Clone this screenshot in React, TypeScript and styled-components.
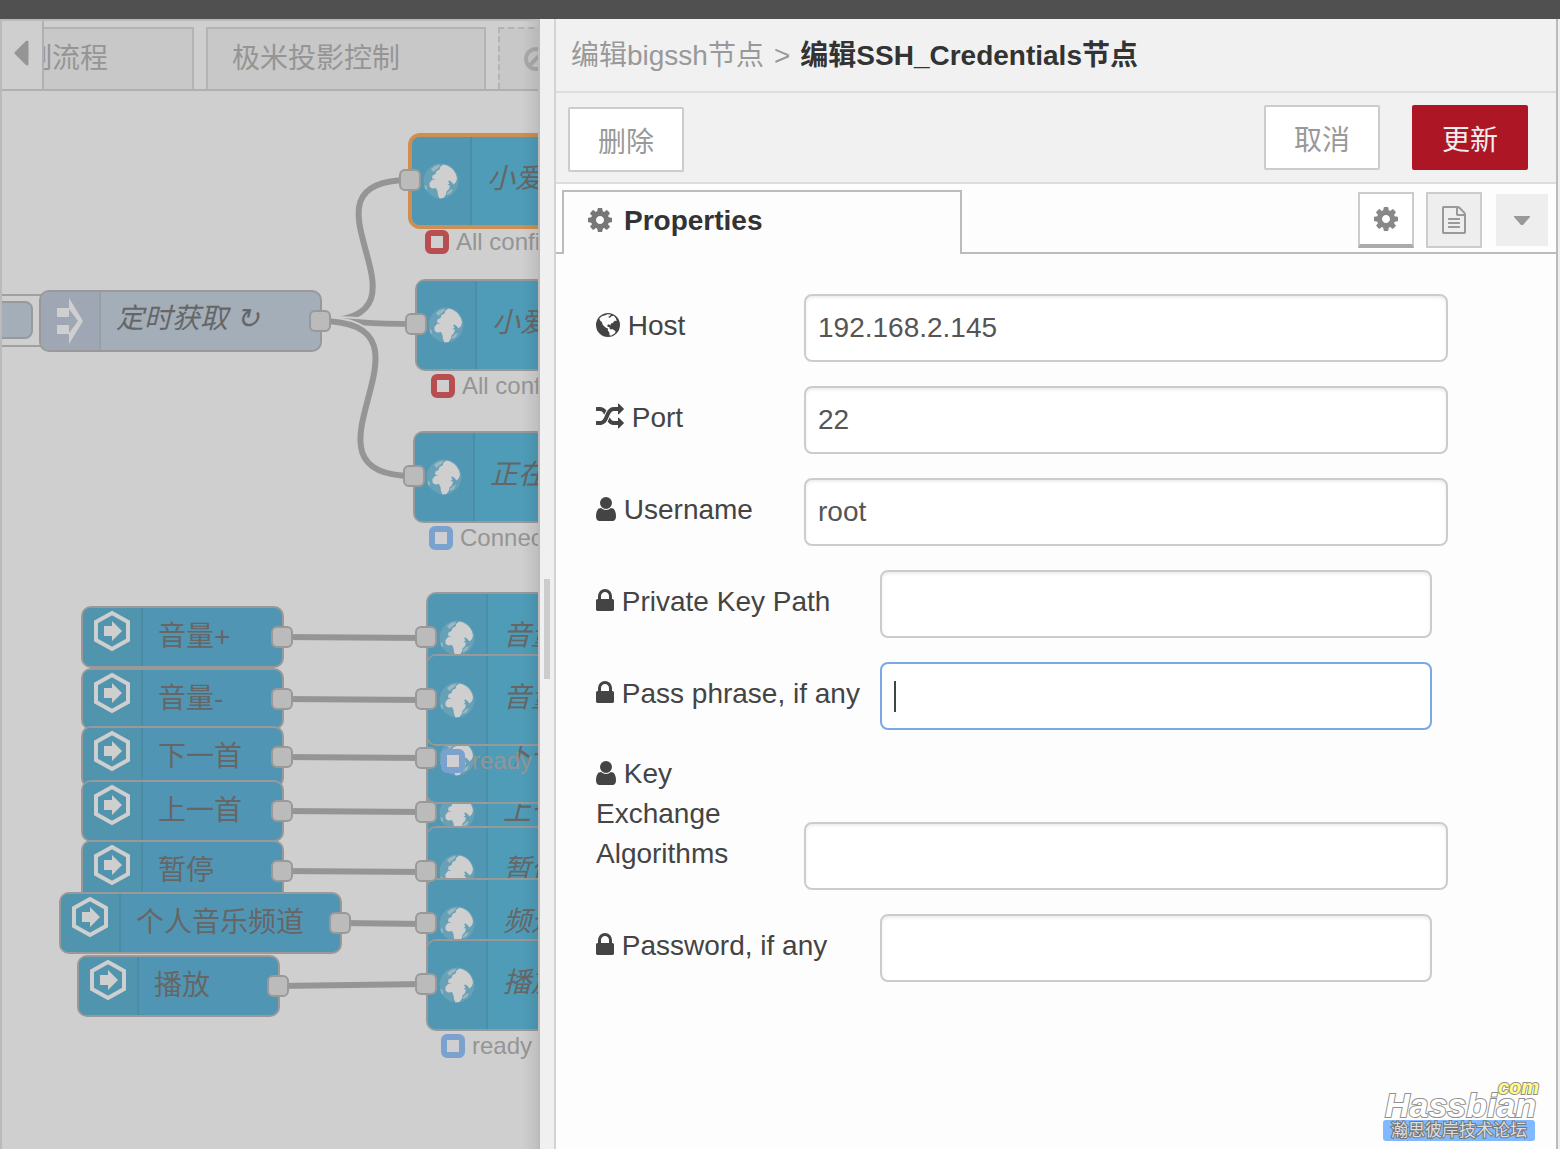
import React from "react";
import styled, { createGlobalStyle, css } from "styled-components";

const GlobalStyle = createGlobalStyle`
  *, *::before, *::after { box-sizing: border-box; }
  body {
    margin: 0;
    background: #cfcfcf;
    font-family: "Liberation Sans", "Noto Sans CJK SC", sans-serif;
    font-size: 28px;
    line-height: 40px;
    color: #444;
  }
  button, input { font: inherit; }
`;

/* ---------- shell ---------- */

const Page = styled.div`
  display: flex;
  flex-direction: column;
  min-height: 100vh;
`;

const TopBar = styled.header`
  flex: none;
  height: 19px;
  background: #505050;
`;

const Body = styled.main`
  flex: 1;
  display: grid;
  grid-template-columns: 540px minmax(0, 1fr);
`;

/* ---------- workspace ---------- */

const Workspace = styled.section`
  display: flex;
  flex-direction: column;
  position: relative;
  overflow: hidden;
  border: 2px solid #bababa;
  border-bottom: 0;
  background: #cfcfcf;

  &::after {
    content: "";
    position: absolute;
    inset: 0 0 0 auto;
    width: 16px;
    background: linear-gradient(to right, rgba(0, 0, 0, 0), rgba(0, 0, 0, 0.08));
  }
`;

const FlowTabs = styled.nav`
  flex: none;
  display: flex;
  align-items: flex-end;
  gap: 12px;
  height: 70px;
  border-bottom: 2px solid #b0b0b0;
`;

const FlowTab = styled.button<{ $first?: boolean; $disabled?: boolean }>`
  flex: none;
  width: ${(p) => (p.$first ? 192 : 280)}px;
  height: 62px;
  padding: 0 ${(p) => (p.$first ? 20 : 24)}px;
  border: 2px ${(p) => (p.$disabled ? "dashed" : "solid")} #b3b3b3;
  border-bottom: 0;
  background: #c8c8c8;
  color: ${(p) => (p.$disabled ? "#aaa" : "#959595")};
  text-align: left;
  white-space: nowrap;

  svg { display: block; width: 24px; height: 24px; }
`;

const ScrollTabs = styled.button`
  position: absolute;
  left: 0;
  top: 0;
  display: flex;
  align-items: center;
  justify-content: center;
  width: 42px;
  height: 70px;
  padding: 0 0 4px;
  border: solid #b0b0b0;
  border-width: 0 2px 2px 0;
  background: #cfcfcf;
`;

const Canvas = styled.div`
  flex: 1;
  position: relative;
  margin-top: 1px;
`;

const Wires = styled.svg`
  position: absolute;
  left: 0;
  top: 0;
  width: 100%;
  height: 100%;
  fill: none;
`;

type Look = "ssh" | "link" | "inject";

const looks: Record<Look, { bg: string; icon: string; h: number; line: string }> = {
  ssh: { bg: "#4f9cb8", icon: "#4f97b2", h: 92, line: "#4a8ea8" },
  link: { bg: "#5096b4", icon: "#5094ae", h: 62, line: "#4a8ba5" },
  inject: { bg: "#a3aeb9", icon: "#9fa7b4", h: 62, line: "#989eaa" },
};

const NodeBox = styled.div<{ $x: number; $y: number; $w: number; $look: Look; $selected?: boolean }>`
  position: absolute;
  left: ${(p) => p.$x}px;
  top: ${(p) => p.$y}px;
  display: flex;
  width: ${(p) => p.$w}px;
  height: ${(p) => looks[p.$look].h}px;
  border: 2px solid #999;
  border-radius: 10px;
  background: ${(p) => looks[p.$look].bg};
  color: #666;
  ${(p) => p.$selected && css`
    border-color: #cf8f50;
    box-shadow: 0 0 0 2px #cf8f50;
  `}
`;

const NodeIcon = styled.span<{ $look: Look }>`
  flex: none;
  display: flex;
  align-items: center;
  justify-content: center;
  width: 60px;
  padding-bottom: ${(p) => (p.$look === "link" ? 12 : 0)}px;
  border-right: 2px solid ${(p) => looks[p.$look].line};
  border-radius: 8px 0 0 8px;
  background: ${(p) => looks[p.$look].icon};
`;

const NodeLabel = styled.span<{ $italic?: boolean }>`
  align-self: center;
  padding: 0 0 ${(p) => (p.$italic ? 4 : 0)}px 15px;
  font-style: ${(p) => (p.$italic ? "italic" : "normal")};
  white-space: nowrap;
`;

const Port = styled.i<{ $x: number; $y: number }>`
  position: absolute;
  left: ${(p) => p.$x - 11}px;
  top: ${(p) => p.$y - 11}px;
  width: 22px;
  height: 22px;
  border: 2px solid #999;
  border-radius: 6px;
  background: #bbb;
`;

const Status = styled.div<{ $x: number; $y: number; $color: string }>`
  position: absolute;
  left: ${(p) => p.$x}px;
  top: ${(p) => p.$y}px;
  display: flex;
  align-items: center;
  gap: 7px;
  height: 24px;
  color: #959595;
  font-size: 24px;
  white-space: nowrap;

  &::before {
    content: "";
    width: 24px;
    height: 24px;
    border: 6px solid ${(p) => p.$color};
    border-radius: 6px;
    background: #cfcfcf;
  }
`;

const InjectFrame = styled.div`
  position: absolute;
  left: -20px;
  top: 202px;
  width: 80px;
  height: 53px;
  border: 2px solid #a0a0a0;
`;

const InjectButton = styled.button`
  position: absolute;
  left: -12px;
  top: 209px;
  width: 43px;
  height: 38px;
  border: 2px solid #999;
  border-radius: 8px;
  background: #a3aeb9;
`;

const EarthIcon = () => (
  <svg width="36" height="36" viewBox="0 0 36 36">
    <circle cx="18" cy="18" r="17.5" fill="#cfcfcf" fillOpacity=".2" />
    <path
      fill="#cfcfcf"
      d="M9 15.500l.5-3 3-1.500 1-3 3-1.500 1-3 3-2c4 .5 8 3 10.500 6.500l2 3.500 1 4-1 3.500-2.500 2.500-1.500-2-2.500-2-1.500.5 1.500 2.500-2.500 2-3-3.500-2.500-1.500-3 .5-2-1.500z"
    />
    <path fill="#cfcfcf" d="M6.500 20l2.500-3 4-1 5 1 3.500.500 2.500 4.500 3 .5-1 3.500-2.500 2.500-.5 3-2.500 3.500-4 .5-1.500-3.500-.5-4-1.500-3-4 .5-2.500-2z" />
    <path fill="#cfcfcf" fillOpacity=".5" d="M8 6l4-3 5-1.500-1 3-3.500 2.500-2 2zM1.500 22l2 1 .5 4-2-1zM24 30l3-3 3-1-2 4-4 2z" />
  </svg>
);

const LinkIcon = () => (
  <svg width="40" height="44" viewBox="0 0 40 44" fill="none">
    <path d="M20 4l16 9v18l-16 9-16-9V13z" stroke="#cfcfcf" strokeWidth="4" />
    <path d="M12 17h8v-5l10 10-10 10v-5h-8z" fill="#cfcfcf" />
  </svg>
);

const InjectIcon = () => (
  <svg width="26" height="48" viewBox="0 0 26 48">
    <path
      fill="#cfcfcf"
      fillRule="evenodd"
      d="M0 11h12V1l14 23-14 23V37H0zM0 20h12v-8l9 12-9 12v-8H0z"
    />
  </svg>
);

interface NodeSpec {
  x: number;
  y: number;
  w: number;
  look: Look;
  label: string;
  selected?: boolean;
}

const nodes: NodeSpec[] = [
  { x: 37, y: 198, w: 283, look: "inject", label: "定时获取 ↻" },
  { x: 408, y: 43, w: 260, look: "ssh", label: "小爱音箱", selected: true },
  { x: 413, y: 187, w: 260, look: "ssh", label: "小爱音箱" },
  { x: 411, y: 339, w: 260, look: "ssh", label: "正在播放" },
  { x: 424, y: 675, w: 260, look: "ssh", label: "上一首" },
  { x: 424, y: 620, w: 260, look: "ssh", label: "下一首" },
  { x: 424, y: 500, w: 260, look: "ssh", label: "音量+" },
  { x: 424, y: 562, w: 260, look: "ssh", label: "音量-" },
  { x: 424, y: 734, w: 260, look: "ssh", label: "暂停" },
  { x: 424, y: 786, w: 260, look: "ssh", label: "频道" },
  { x: 424, y: 847, w: 260, look: "ssh", label: "播放" },
  { x: 79, y: 514, w: 203, look: "link", label: "音量+" },
  { x: 79, y: 576, w: 203, look: "link", label: "音量-" },
  { x: 79, y: 634, w: 203, look: "link", label: "下一首" },
  { x: 79, y: 688, w: 203, look: "link", label: "上一首" },
  { x: 79, y: 748, w: 203, look: "link", label: "暂停" },
  { x: 57, y: 800, w: 283, look: "link", label: "个人音乐频道" },
  { x: 75, y: 863, w: 203, look: "link", label: "播放" },
];

const ports: [number, number][] = [
  [318, 229], [408, 88], [414, 232], [412, 384],
  [280, 545], [280, 607], [280, 665], [280, 719], [280, 779], [338, 831], [276, 894],
  [424, 545], [424, 607], [424, 666], [424, 720], [424, 779], [424, 831], [424, 892],
];

const wires = [
  "M318 229C448 229 280 88 408 88",
  "M318 229C370 229 350 232 414 232",
  "M318 229C455 229 278 384 412 384",
  "M280 545L424 546",
  "M280 607L424 608",
  "M280 665L424 666",
  "M280 719L424 720",
  "M280 779L424 780",
  "M338 831L424 832",
  "M276 894L424 892",
];

const nodeIcons: Record<Look, React.ReactNode> = {
  ssh: <EarthIcon />,
  link: <LinkIcon />,
  inject: <InjectIcon />,
};

function FlowCanvas() {
  return (
    <Canvas>
      <Wires>
        {wires.map((d) => (
          <g key={d}>
            <path d={d} stroke="#cfcfcf" strokeWidth="10" />
            <path d={d} stroke="#959595" strokeWidth="6" />
          </g>
        ))}
      </Wires>
      <InjectFrame />
      <InjectButton aria-label="Inject" />
      {nodes.map((n) => (
        <NodeBox key={`${n.x}-${n.y}`} $x={n.x} $y={n.y} $w={n.w} $look={n.look} $selected={n.selected}>
          <NodeIcon $look={n.look}>{nodeIcons[n.look]}</NodeIcon>
          <NodeLabel $italic={n.look !== "link"}>{n.label}</NodeLabel>
        </NodeBox>
      ))}
      {ports.map(([x, y]) => (
        <Port key={`${x}-${y}`} $x={x} $y={y} />
      ))}
      <Status $x={423} $y={138} $color="#b84e50">All config</Status>
      <Status $x={429} $y={282} $color="#b84e50">All config</Status>
      <Status $x={427} $y={434} $color="#7ba2cf">Connected</Status>
      <Status $x={439} $y={657} $color="#7ba2cf">ready</Status>
      <Status $x={439} $y={942} $color="#7ba2cf">ready</Status>
    </Canvas>
  );
}

/* ---------- edit tray ---------- */

const Tray = styled.aside`
  display: grid;
  grid-template-columns: 16px minmax(0, 1fr);
  border-right: 2px solid #eee;
  position: relative;
`;

const Resizer = styled.div`
  padding: 560px 4px 0;
  border-right: 2px solid #d3d3d3;
  background: #f0f0f0;

  &::before {
    content: "";
    display: block;
    width: 6px;
    height: 100px;
    background: #ccc;
  }
`;

const Editor = styled.div`
  display: flex;
  flex-direction: column;
  border-right: 2px solid #bbb;
  background: #fdfdfd;
`;

const Breadcrumb = styled.h1`
  display: flex;
  gap: 10px;
  margin: 0;
  height: 74px;
  padding: 17px 15px 15px;
  border-bottom: 2px solid #ddd;
  background: #f1f1f1;
  font-size: 28px;
  font-weight: 400;
  color: #999;
  white-space: nowrap;

  strong { color: #333; }
`;

const Toolbar = styled.div`
  display: flex;
  align-items: flex-start;
  gap: 32px;
  height: 91px;
  padding: 12px 28px 10px 12px;
  border-bottom: 2px solid #ddd;
  background: #f1f1f1;
`;

const Button = styled.button<{ $primary?: boolean; $left?: boolean }>`
  width: 116px;
  height: 65px;
  padding: 6px 0 0;
  border: 2px solid ${(p) => (p.$primary ? "#ad1625" : "#ccc")};
  border-radius: 2px;
  background: ${(p) => (p.$primary ? "#ad1625" : "#fff")};
  color: ${(p) => (p.$primary ? "#eee" : "#999")};
  ${(p) => p.$left && css`
    align-self: flex-end;
    margin-right: auto;
  `}
`;

const TabRow = styled.div`
  display: flex;
  align-items: stretch;
  height: 70px;
`;

const TabRule = styled.div<{ $grow?: boolean }>`
  display: flex;
  align-items: center;
  justify-content: flex-end;
  gap: 12px;
  flex: ${(p) => (p.$grow ? "1" : "0 0 6px")};
  padding-right: ${(p) => (p.$grow ? 8 : 0)}px;
  border-bottom: 2px solid #bbb;
`;

const PropertiesTab = styled.button`
  width: 400px;
  margin-top: 6px;
  padding: 0 24px 4px;
  border: 2px solid #bbb;
  border-bottom: 0;
  background: #fdfdfd;
  color: #333;
  font-weight: 700;
  text-align: left;

  svg { margin-right: 12px; color: #777; }
`;

const IconButton = styled.button<{ $kind: "active" | "idle" | "menu" }>`
  display: flex;
  align-items: center;
  justify-content: center;
  width: ${(p) => (p.$kind === "menu" ? 52 : 56)}px;
  height: ${(p) => (p.$kind === "menu" ? 52 : 56)}px;
  margin-left: ${(p) => (p.$kind === "menu" ? 2 : 0)}px;
  margin-top: 4px;
  padding: 0;
  border: ${(p) => (p.$kind === "menu" ? 0 : 2)}px solid #ccc;
  background: ${(p) => (p.$kind === "active" ? "#fff" : "#eee")};
  color: ${(p) => (p.$kind === "active" ? "#888" : "#999")};
  ${(p) => p.$kind === "active" && css`border-bottom: 4px solid #aaa;`}

  svg { display: block; }
`;

const Form = styled.form`
  display: flex;
  flex-direction: column;
  gap: 24px;
  padding: 40px;
`;

const Row = styled.div`
  display: flex;
  align-items: flex-end;
  gap: 8px;
`;

const Label = styled.label<{ $wide?: boolean }>`
  flex: none;
  width: ${(p) => (p.$wide ? 276 : 200)}px;
  padding-bottom: 16px;
`;

const Field = styled.span<{ $wide?: boolean; $caret?: boolean }>`
  position: relative;
  width: ${(p) => (p.$wide ? 60 : 70)}%;
  ${(p) => p.$caret && css`
    &::after {
      content: "";
      position: absolute;
      left: 14px;
      top: 19px;
      width: 2px;
      height: 31px;
      background: #444;
    }
  `}
`;

const Input = styled.input<{ $focused?: boolean }>`
  display: block;
  width: 100%;
  height: 68px;
  padding: 0 12px;
  border: 2px solid ${(p) => (p.$focused ? "#78a8e8" : "#ccc")};
  border-radius: 8px;
  outline: 0;
  background: #fff;
  box-shadow: ${(p) => (p.$focused ? "none" : "inset 0 2px 3px rgba(0, 0, 0, 0.075)")};
  color: #555;
`;

const FaGlyph = styled.svg`
  height: 28px;
  vertical-align: -4px;
  fill: currentColor;
`;

const glyphs = {
  lock: {
    x: 320,
    w: 1152,
    d: "M640 768h512v-192q0-106-75-181t-181-75-181 75-75 181v192zm832 96v576q0 40-28 68t-68 28h-960q-40 0-68-28t-28-68v-576q0-40 28-68t68-28h32v-192q0-184 132-316t316-132 316 132 132 316v192h32q40 0 68 28t28 68z",
  },
  user: {
    x: 256,
    w: 1280,
    d: "M1536 1399q0 109-62.500 187t-150.500 78h-854q-88 0-150.500-78t-62.500-187q0-85 8.500-160.500t31.500-152 58.500-131 94-89 134.500-34.500q131 128 313 128t313-128q76 0 134.500 34.500t94 89 58.500 131 31.500 152 8.500 160.500zm-256-887q0 159-112.500 271.500t-271.500 112.500-271.500-112.500-112.500-271.500 112.500-271.500 271.500-112.500 271.500 112.500 112.500 271.500z",
  },
  random: {
    x: 0,
    w: 1792,
    d: "M666 481q-60 92-137 273-22-45-37-72.500t-40.500-63.500-51-56.500-63-35-81.500-14.500h-224q-14 0-23-9t-9-23v-192q0-14 9-23t23-9h224q250 0 410 225zm1126 799q0 14-9 23l-320 320q-9 9-23 9-13 0-22.500-9.500t-9.500-22.500v-192q-32 0-85 .5t-81 1-73-1-71-5-64-10.500-63-18.500-58-28.500-59-40-55-53.500-56-69.500q59-93 136-273 22 45 37 72.500t40.500 63.500 51 56.500 63 35 81.500 14.500h256v-192q0-14 9-23t23-9q12 0 24 10l319 319q9 9 9 23zm0-896q0 14-9 23l-320 320q-9 9-23 9-13 0-22.500-9.500t-9.500-22.500v-192h-256q-48 0-87 15t-69 45-51 61.500-45 77.500q-32 62-78 171-29 66-49.500 111t-54 105-64 100-74 83-90 68.500-106.500 42-128 16.500h-224q-14 0-23-9t-9-23v-192q0-14 9-23t23-9h224q48 0 87-15t69-45 51-61.500 45-77.500q32-62 78-171 29-66 49.500-111t54-105 64-100 74-83 90-68.500 106.500-42 128-16.500h256v-192q0-14 9-23t23-9q12 0 24 10l319 319q9 9 9 23z",
  },
  cog: {
    x: 128,
    w: 1536,
    d: "M1152 896q0-106-75-181t-181-75-181 75-75 181 75 181 181 75 181-75 75-181zm512-109v222q0 12-8 23t-20 13l-185 28q-19 54-39 91 35 50 107 138 10 12 10 25t-9 23q-27 37-99 108t-94 71q-12 0-26-9l-138-108q-44 23-91 38-16 136-29 186-7 28-36 28h-222q-14 0-24.500-8.500t-11.500-21.500l-28-184q-49-16-90-37l-141 107q-10 9-25 9-14 0-25-11-126-114-165-168-7-10-7-23 0-12 8-23 15-21 51-66.500t54-70.500q-27-50-41-99l-183-27q-13-2-21-12.500t-8-23.500v-222q0-12 8-23t19-13l186-28q14-46 39-92-40-57-107-138-10-12-10-24 0-10 9-23 26-36 98.500-107.500t94.500-71.500q13 0 26 10l138 107q44-23 91-38 16-136 29-186 7-28 36-28h222q14 0 24.500 8.500t11.500 21.500l28 184q49 16 90 37l142-107q9-9 24-9 13 0 25 10 129 119 165 170 7 8 7 22 0 12-8 23-15 21-51 66.500t-54 70.500q26 50 41 98l183 28q13 2 21 12.500t8 23.500z",
  },
  file: {
    x: 128,
    w: 1536,
    d: "M1596 380q28 28 48 76t20 88v1152q0 40-28 68t-68 28h-1344q-40 0-68-28t-28-68v-1600q0-40 28-68t68-28h896q40 0 88 20t76 48zm-444-244v376h376q-10-29-22-41l-313-313q-12-12-41-22zm384 1528v-1024h-416q-40 0-68-28t-28-68v-416h-768v1536h1280zm-1024-864q0-14 9-23t23-9h704q14 0 23 9t9 23v64q0 14-9 23t-23 9h-704q-14 0-23-9t-9-23v-64zm736 224q14 0 23 9t9 23v64q0 14-9 23t-23 9h-704q-14 0-23-9t-9-23v-64q0-14 9-23t23-9h704zm0 256q14 0 23 9t9 23v64q0 14-9 23t-23 9h-704q-14 0-23-9t-9-23v-64q0-14 9-23t23-9h704z",
  },
  globe: {
    x: 128,
    w: 1536,
    d: "M896 128a768 768 0 1 0 0 1536a768 768 0 1 0 0-1536zM340 480L500 340L720 270L860 210L1080 220L1000 330L900 360L1010 440L1110 330L1260 300L1400 470L1450 640L1320 620L1200 760L1090 800L1040 930L960 850L850 900L880 1020L980 1020L1020 1160L1200 1170L1380 1290L1340 1420L1120 1560L1000 1570L980 1370L880 1240L900 1130L720 1040L560 880L500 700L400 620z",
  },
};

type GlyphName = keyof typeof glyphs;

const Glyph = ({ name }: { name: GlyphName }) => {
  const g = glyphs[name];
  return (
    <FaGlyph viewBox={`${g.x} 0 ${g.w} 1792`} width={g.w / 64} aria-hidden="true">
      <path fillRule="evenodd" d={g.d} />
    </FaGlyph>
  );
};

interface FieldSpec {
  id: string;
  icon: GlyphName;
  label: string;
  value?: string;
  wide?: boolean;
  focused?: boolean;
}

const fields: FieldSpec[] = [
  { id: "host", icon: "globe", label: "Host", value: "192.168.2.145" },
  { id: "port", icon: "random", label: "Port", value: "22" },
  { id: "username", icon: "user", label: "Username", value: "root" },
  { id: "keypath", icon: "lock", label: "Private Key Path", wide: true },
  { id: "passphrase", icon: "lock", label: "Pass phrase, if any", wide: true, focused: true },
  { id: "kex", icon: "user", label: "Key Exchange Algorithms" },
  { id: "password", icon: "lock", label: "Password, if any", wide: true },
];

/* ---------- forum mark ---------- */

const Mark = styled.div`
  position: absolute;
  right: 19px;
  bottom: 8px;
  display: flex;
  flex-direction: column;
  align-items: flex-start;
  width: 156px;
  font-style: italic;
  font-weight: 700;
  -webkit-text-stroke: 2px #909090;
  paint-order: stroke fill;
`;

const MarkCom = styled.span`
  align-self: flex-end;
  height: 10px;
  color: #ffff80;
  font-size: 20px;
  line-height: 14px;
`;

const MarkName = styled.span`
  padding-left: 2px;
  color: #fff;
  font-size: 34px;
  line-height: 30px;
`;

const MarkTag = styled.span`
  width: 152px;
  border-radius: 3px;
  background: #80b9ff;
  color: #ddd;
  font-size: 17px;
  font-style: normal;
  font-weight: 400;
  line-height: 21px;
  text-align: center;
  white-space: nowrap;
  -webkit-text-stroke-color: #777;
`;

export default function App() {
  return (
    <Page>
      <GlobalStyle />
      <TopBar />
      <Body>
        <Workspace>
          <FlowTabs>
            <FlowTab $first>制流程</FlowTab>
            <FlowTab>极米投影控制</FlowTab>
            <FlowTab $disabled aria-label="Disabled flow">
              <svg viewBox="0 0 24 24" fill="none" stroke="currentColor" strokeWidth="4">
                <circle cx="12" cy="12" r="10" />
                <path d="M5 19L19 5" />
              </svg>
            </FlowTab>
          </FlowTabs>
          <ScrollTabs aria-label="Scroll tabs left">
            <svg width="16" height="26" viewBox="0 0 16 26">
              <path d="M13 2v22L2 13z" fill="#959595" stroke="#959595" strokeWidth="3" strokeLinejoin="round" />
            </svg>
          </ScrollTabs>
          <FlowCanvas />
        </Workspace>
        <Tray>
          <Resizer />
          <Editor>
            <Breadcrumb>
              <span>编辑bigssh节点</span>
              <span>&gt;</span>
              <strong>编辑SSH_Credentials节点</strong>
            </Breadcrumb>
            <Toolbar>
              <Button $left>删除</Button>
              <Button>取消</Button>
              <Button $primary>更新</Button>
            </Toolbar>
            <TabRow>
              <TabRule />
              <PropertiesTab><Glyph name="cog" />Properties</PropertiesTab>
              <TabRule $grow>
                <IconButton $kind="active" aria-label="Properties"><Glyph name="cog" /></IconButton>
                <IconButton $kind="idle" aria-label="Description"><Glyph name="file" /></IconButton>
                <IconButton $kind="menu" aria-label="More tabs">
                  <svg width="16" height="9" viewBox="0 0 16 9"><path d="M0 0h16v1L9 9H7L0 1z" fill="#999" /></svg>
                </IconButton>
              </TabRule>
            </TabRow>
            <Form onSubmit={(e) => e.preventDefault()}>
              {fields.map((f) => (
                <Row key={f.id}>
                  <Label htmlFor={f.id} $wide={f.wide}>
                    <Glyph name={f.icon} /> {f.label}
                  </Label>
                  <Field $wide={f.wide} $caret={f.focused}>
                    <Input id={f.id} type="text" defaultValue={f.value} $focused={f.focused} />
                  </Field>
                </Row>
              ))}
            </Form>
          </Editor>
          <Mark>
            <MarkCom>com</MarkCom>
            <MarkName>Hassbian</MarkName>
            <MarkTag>瀚思彼岸技术论坛</MarkTag>
          </Mark>
        </Tray>
      </Body>
    </Page>
  );
}
